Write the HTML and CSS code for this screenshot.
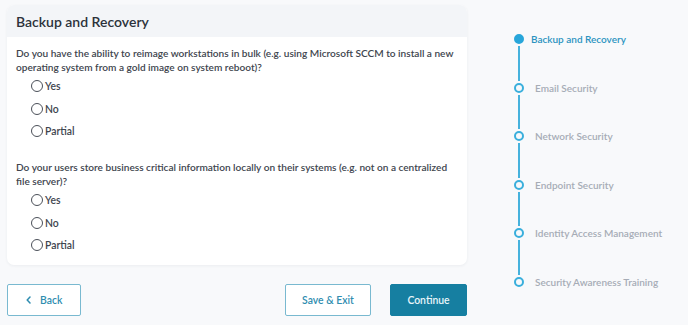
FILE: index.html
```html
<!DOCTYPE html>
<html lang="en">
<head>
    <meta charset="UTF-8">
    <meta name="viewport" content="width=device-width, initial-scale=1.0">
    <title>Backup and Recovery</title>
    <link rel="stylesheet" href="styles.css">
</head>
<body>
    <div class="page">
        <main class="main-col">
            <section class="card">
                <header class="card-head">
                    <h1>Backup and Recovery</h1>
                </header>
                <div class="card-body">
                    <div class="question">
                        <p class="q-text">Do you have the ability to reimage workstations in bulk (e.g. using Microsoft SCCM to install a new operating system from a gold image on system reboot)?</p>
                        <label class="option"><input type="radio" name="q1"><span class="ring"></span>Yes</label>
                        <label class="option"><input type="radio" name="q1"><span class="ring"></span>No</label>
                        <label class="option"><input type="radio" name="q1"><span class="ring"></span>Partial</label>
                    </div>
                    <div class="question">
                        <p class="q-text">Do your users store business critical information locally on their systems (e.g. not on a centralized file server)?</p>
                        <label class="option"><input type="radio" name="q2"><span class="ring"></span>Yes</label>
                        <label class="option"><input type="radio" name="q2"><span class="ring"></span>No</label>
                        <label class="option"><input type="radio" name="q2"><span class="ring"></span>Partial</label>
                    </div>
                </div>
            </section>
            <div class="actions">
                <button class="btn btn-outline btn-back">
                    <svg class="chev" width="5" height="8" viewBox="0 0 5 8"><polyline points="4,1 1.2,4 4,7" fill="none" stroke="currentColor" stroke-width="1.5" stroke-linecap="round" stroke-linejoin="round"/></svg>
                    Back
                </button>
                <div class="actions-right">
                    <button class="btn btn-outline btn-save">Save &amp; Exit</button>
                    <button class="btn btn-primary btn-continue">Continue</button>
                </div>
            </div>
        </main>
        <aside class="steps">
            <div class="step active"><span class="dot"></span><span class="step-label">Backup and Recovery</span></div>
            <div class="link"></div>
            <div class="step"><span class="dot"></span><span class="step-label">Email Security</span></div>
            <div class="link"></div>
            <div class="step"><span class="dot"></span><span class="step-label">Network Security</span></div>
            <div class="link"></div>
            <div class="step"><span class="dot"></span><span class="step-label">Endpoint Security</span></div>
            <div class="link"></div>
            <div class="step"><span class="dot"></span><span class="step-label">Identity Access Management</span></div>
            <div class="link"></div>
            <div class="step"><span class="dot"></span><span class="step-label">Security Awareness Training</span></div>
        </aside>
    </div>
</body>
</html>
```

FILE: styles.css
```css
body {
    margin: 0;
    background-color: #f8f9fb;
    font-family: Lato, "Open Sans", sans-serif;
    color: #3a3f47;
}
.page {
    display: flex;
    padding: 5px 0 0 7px;
    column-gap: 47px;
}
.main-col {
    width: 460px;
}
.card {
    background-color: #fff;
    border-radius: 7px;
    box-shadow: 0 1px 3px rgba(40, 50, 70, 0.06);
    overflow: hidden;
}
.card-head {
    height: 32px;
    background-color: #f3f5f8;
    display: flex;
    align-items: center;
    padding: 0 9px;
}
.card-head h1 {
    margin: 0;
    font-size: 14px;
    font-weight: 600;
    color: #2c323b;
}
.card-body {
    padding: 8.5px 9px 8px 9px;
}
.question + .question {
    margin-top: 17px;
}
.q-text {
    margin: 0;
    font-size: 10.1px;
    line-height: 14.5px;
    font-weight: 600;
    color: #40454e;
}
.option {
    display: flex;
    align-items: center;
    height: 22.7px;
    padding-left: 15px;
    font-size: 10.4px;
    font-weight: 600;
    color: #40454e;
}
.option input {
    display: none;
}
.ring {
    box-sizing: border-box;
    width: 12px;
    height: 12px;
    border: 1.2px solid #4b5059;
    border-radius: 50%;
    margin-right: 2px;
}
.actions {
    display: flex;
    justify-content: space-between;
    margin-top: 19px;
}
.actions-right {
    display: flex;
    column-gap: 19px;
}
.btn {
    height: 32px;
    box-sizing: border-box;
    border-radius: 2px;
    font-family: inherit;
    font-size: 10.4px;
    font-weight: 600;
    padding: 0;
    cursor: pointer;
}
.btn-outline {
    background-color: #fff;
    border: 1px solid #79b9d0;
    color: #2f8db0;
}
.btn-back {
    width: 74px;
}
.chev {
    margin-right: 7px;
    vertical-align: -0.5px;
}
.btn-save {
    width: 86px;
}
.btn-primary {
    background-color: #167fa1;
    border: 1px solid #167fa1;
    color: #e9f5fa;
}
.btn-continue {
    width: 77px;
}
.steps {
    padding-top: 29px;
    display: flex;
    flex-direction: column;
}
.step {
    display: flex;
    align-items: center;
    height: 10px;
}
.dot {
    box-sizing: border-box;
    width: 10px;
    height: 10px;
    border-radius: 50%;
    border: 2px solid #3aafdc;
    flex: none;
}
.step-label {
    margin-left: 11px;
    font-size: 10px;
    font-weight: 600;
    color: #a6acb6;
    white-space: nowrap;
}
.step.active .dot {
    background-color: #28a6da;
    border-color: #28a6da;
}
.step.active .step-label {
    margin-left: 7px;
    color: #2a93c0;
}
.link {
    width: 2px;
    height: 34.6px;
    margin: 2px 0 2px 4px;
    background-color: #46b2dd;
}
```
